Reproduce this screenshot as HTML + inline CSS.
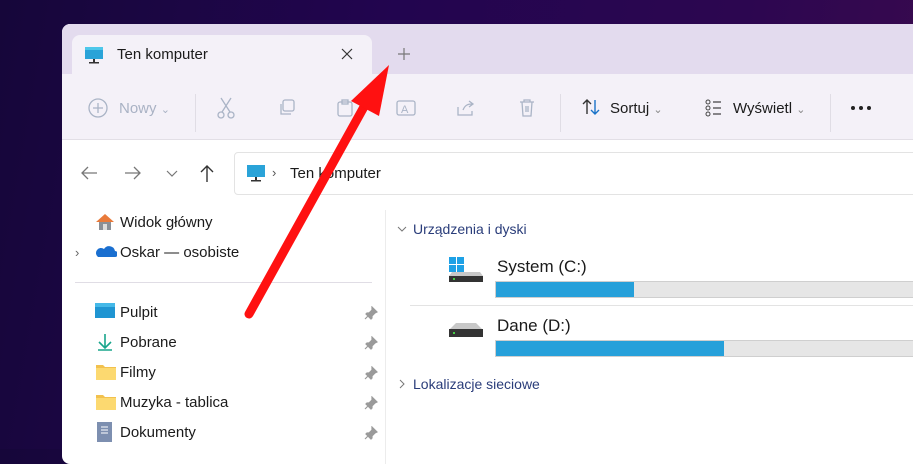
<!DOCTYPE html>
<html><head><meta charset="utf-8"><style>
*{margin:0;padding:0;box-sizing:border-box}
body{width:913px;height:449px;overflow:hidden;font-family:"Liberation Sans",sans-serif;background:linear-gradient(100deg,#16063a 0%,#22054f 40%,#2c0650 75%,#3a0a4e 100%);position:relative}
.win{position:absolute;left:62px;top:24px;width:870px;height:440px;background:#fff;border-radius:8px;overflow:hidden}
.title{position:absolute;left:0;top:0;right:0;height:50px;background:#e3dbee}
.tab{position:absolute;left:10px;top:11px;width:300px;height:40px;background:#f4f1f8;border-radius:8px 8px 0 0}
.tb{position:absolute;left:0;top:50px;right:0;height:66px;background:#f4f1f8;border-bottom:1px solid #e2dfe6}
.t{position:absolute;font-size:15px;color:#1b1b1b;white-space:nowrap}
.g{color:#a9b2c4}
.sep{position:absolute;width:1px;background:#e0dde5}
.ic{position:absolute}
</style></head><body>
<div class="win">
 <div class="title"></div>
 <div class="tab"></div>
 <svg class="ic" style="left:22px;top:22px" width="20" height="18"><rect x="1" y="1" width="18" height="12" fill="#2aa3d8"/><rect x="1" y="1" width="18" height="3" fill="#4dc7ea"/><rect x="9" y="13" width="2" height="3" fill="#333"/><rect x="5" y="16" width="10" height="1.5" fill="#333"/></svg>
 <div class="t" style="left:55px;top:22px;font-size:15px">Ten komputer</div>
 <svg class="ic" style="left:279px;top:24px" width="12" height="12"><path d="M1 1l10 10M11 1L1 11" stroke="#333" stroke-width="1.2"/></svg>
 <svg class="ic" style="left:336px;top:24px" width="12" height="12"><path d="M6 0v12M0 6h12" stroke="#777" stroke-width="1.2"/></svg>
 <div class="tb"></div>
 <svg class="ic" style="left:25px;top:73px" width="22" height="22"><circle cx="11" cy="11" r="9" fill="none" stroke="#aab4c6" stroke-width="1.3"/><path d="M11 6v10M6 11h10" stroke="#aab4c6" stroke-width="1.3"/></svg>
 <div class="t g" style="left:57px;top:76px">Nowy <span style="font-size:11px">⌄</span></div>
 <div class="sep" style="left:133px;top:70px;height:38px"></div>
 <svg class="ic" style="left:154px;top:73px" width="20" height="22"><path d="M5 1l9 14M15 1L6 15" stroke="#aab4c6" stroke-width="1.3"/><circle cx="5" cy="18" r="3" fill="none" stroke="#aab4c6" stroke-width="1.3"/><circle cx="15" cy="18" r="3" fill="none" stroke="#aab4c6" stroke-width="1.3"/></svg>
 <svg class="ic" style="left:215px;top:74px" width="20" height="20"><rect x="6" y="2" width="11" height="11" rx="2" fill="none" stroke="#aab4c6" stroke-width="1.3"/><path d="M4 6v10h10" fill="none" stroke="#aab4c6" stroke-width="1.3"/></svg>
 <svg class="ic" style="left:273px;top:74px" width="20" height="20"><rect x="3" y="4" width="14" height="14" rx="2" fill="none" stroke="#aab4c6" stroke-width="1.3"/><rect x="7" y="2" width="6" height="4" fill="none" stroke="#aab4c6" stroke-width="1.3"/></svg>
 <svg class="ic" style="left:333px;top:73px" width="22" height="22"><rect x="2" y="4" width="18" height="14" rx="2" fill="none" stroke="#aab4c6" stroke-width="1.3"/><text x="6" y="16" font-size="11" fill="#aab4c6" font-family="Liberation Sans">A</text></svg>
 <svg class="ic" style="left:393px;top:73px" width="22" height="22"><path d="M3 10v8h14v-4M8 13c2-5 5-6 9-6M14 4l4 3-4 3" fill="none" stroke="#aab4c6" stroke-width="1.3"/></svg>
 <svg class="ic" style="left:454px;top:73px" width="22" height="22"><path d="M4 5h14M8 5V3h6v2M6 5l1 14h8l1-14M10 9v6M12 9v6" fill="none" stroke="#aab4c6" stroke-width="1.3"/></svg>
 <div class="sep" style="left:498px;top:70px;height:38px"></div>
 <svg class="ic" style="left:518px;top:72px" width="22" height="22"><path d="M7 18V4M3 8l4-4 4 4" fill="none" stroke="#333" stroke-width="1.4"/><path d="M15 4v14M11 14l4 4 4-4" fill="none" stroke="#1a73c8" stroke-width="1.4"/></svg>
 <div class="t" style="left:548px;top:76px">Sortuj <span style="color:#888;font-size:11px">⌄</span></div>
 <svg class="ic" style="left:641px;top:73px" width="22" height="22"><circle cx="5" cy="5" r="2" fill="none" stroke="#444"/><circle cx="5" cy="11" r="2" fill="none" stroke="#444"/><circle cx="5" cy="17" r="2" fill="none" stroke="#444"/><path d="M10 5h8M10 11h8M10 17h8" stroke="#444" stroke-width="1.3"/></svg>
 <div class="t" style="left:671px;top:76px">Wyświetl <span style="color:#888;font-size:11px">⌄</span></div>
 <div class="sep" style="left:768px;top:70px;height:38px"></div>
 <svg class="ic" style="left:788px;top:81px" width="24" height="6"><circle cx="3" cy="3" r="2" fill="#222"/><circle cx="11" cy="3" r="2" fill="#222"/><circle cx="19" cy="3" r="2" fill="#222"/></svg>
 <svg class="ic" style="left:18px;top:141px" width="18" height="16"><path d="M17 8H2M8 2L2 8l6 6" fill="none" stroke="#777" stroke-width="1.3"/></svg>
 <svg class="ic" style="left:62px;top:141px" width="18" height="16"><path d="M1 8h15M10 2l6 6-6 6" fill="none" stroke="#777" stroke-width="1.3"/></svg>
 <svg class="ic" style="left:104px;top:146px" width="12" height="8"><path d="M1 1l5 5 5-5" fill="none" stroke="#777" stroke-width="1.2"/></svg>
 <svg class="ic" style="left:137px;top:140px" width="16" height="19"><path d="M8 18V2M2 8l6-6 6 6" fill="none" stroke="#333" stroke-width="1.4"/></svg>
 <div style="position:absolute;left:172px;top:128px;width:700px;height:43px;border:1px solid #e3e3e3;border-radius:4px 0 0 4px"></div>
 <svg class="ic" style="left:184px;top:140px" width="20" height="18"><rect x="1" y="1" width="18" height="12" fill="#2aa3d8"/><rect x="9" y="13" width="2" height="3" fill="#333"/><rect x="5" y="16" width="10" height="1.5" fill="#333"/></svg>
 <div class="t" style="left:210px;top:141px;font-size:13px;color:#555">›</div>
 <div class="t" style="left:228px;top:141px;font-size:15px">Ten komputer</div>
 <div class="sep" style="left:323px;top:186px;height:260px;background:#ececec"></div>
 <svg class="ic" style="left:33px;top:188px" width="20" height="20"><path d="M10 2L1 10h3v8h12v-8h3z" fill="#e97a3a"/><rect x="4" y="10" width="12" height="8" fill="#8a8f96"/><rect x="8" y="12" width="4" height="6" fill="#ddd"/></svg>
 <div class="t" style="left:58px;top:190px">Widok główny</div>
 <div class="t" style="left:13px;top:221px;font-size:13px;color:#666">›</div>
 <svg class="ic" style="left:33px;top:220px" width="22" height="14"><path d="M3 13h17a3 3 0 0 0 0-6 6 6 0 0 0-11-2A4 4 0 0 0 3 13z" fill="#1a6fd0"/></svg>
 <div class="t" style="left:58px;top:220px">Oskar — osobiste</div>
 <div class="sep" style="left:13px;top:258px;width:297px;height:1px"></div>
 <svg class="ic" style="left:33px;top:279px" width="20" height="16"><rect width="20" height="15" fill="#1f95d2"/><rect width="20" height="4" fill="#45b9e8"/></svg>
 <div class="t" style="left:58px;top:280px">Pulpit</div>
 <svg class="ic" style="left:34px;top:308px" width="18" height="20"><path d="M9 2v13M3 10l6 6 6-6M2 18h14" fill="none" stroke="#19a58c" stroke-width="1.6"/></svg>
 <div class="t" style="left:58px;top:310px">Pobrane</div>
 <svg class="ic" style="left:34px;top:340px" width="20" height="16"><path d="M0 1h7l2 2h11v13H0z" fill="#f2c14e"/><rect y="4" width="20" height="12" fill="#fcd970"/></svg>
 <div class="t" style="left:58px;top:340px">Filmy</div>
 <svg class="ic" style="left:34px;top:370px" width="20" height="16"><path d="M0 1h7l2 2h11v13H0z" fill="#f2c14e"/><rect y="4" width="20" height="12" fill="#fcd970"/></svg>
 <div class="t" style="left:58px;top:370px">Muzyka - tablica</div>
 <svg class="ic" style="left:35px;top:398px" width="16" height="20"><rect width="15" height="20" fill="#7d8fb0"/><path d="M4 5h7M4 8h7M4 11h7" stroke="#fff"/></svg>
 <div class="t" style="left:58px;top:400px">Dokumenty</div>
 <svg class="ic" style="left:302px;top:282px" width="14" height="14"><path d="M8 1l5 5-2 1-3 3 0 2-1 1-5-5 1-1 2 0 3-3z M4 10l-3 3" fill="#9a9a9a" stroke="#9a9a9a" stroke-width="1.2"/></svg>
 <svg class="ic" style="left:302px;top:312px" width="14" height="14"><path d="M8 1l5 5-2 1-3 3 0 2-1 1-5-5 1-1 2 0 3-3z M4 10l-3 3" fill="#9a9a9a" stroke="#9a9a9a" stroke-width="1.2"/></svg>
 <svg class="ic" style="left:302px;top:342px" width="14" height="14"><path d="M8 1l5 5-2 1-3 3 0 2-1 1-5-5 1-1 2 0 3-3z M4 10l-3 3" fill="#9a9a9a" stroke="#9a9a9a" stroke-width="1.2"/></svg>
 <svg class="ic" style="left:302px;top:372px" width="14" height="14"><path d="M8 1l5 5-2 1-3 3 0 2-1 1-5-5 1-1 2 0 3-3z M4 10l-3 3" fill="#9a9a9a" stroke="#9a9a9a" stroke-width="1.2"/></svg>
 <svg class="ic" style="left:302px;top:402px" width="14" height="14"><path d="M8 1l5 5-2 1-3 3 0 2-1 1-5-5 1-1 2 0 3-3z M4 10l-3 3" fill="#9a9a9a" stroke="#9a9a9a" stroke-width="1.2"/></svg>
 <svg class="ic" style="left:335px;top:202px" width="10" height="6"><path d="M1 1l4 4 4-4" fill="none" stroke="#777" stroke-width="1"/></svg>
 <div class="t" style="left:351px;top:197px;font-size:14px;color:#2a3d7a">Urządzenia i dyski</div>
 <svg class="ic" style="left:386px;top:233px" width="36" height="26"><rect x="1" y="0" width="7" height="7" fill="#1ea1e6"/><rect x="9" y="0" width="7" height="7" fill="#1ea1e6"/><rect x="1" y="8" width="7" height="7" fill="#1ea1e6"/><rect x="9" y="8" width="7" height="7" fill="#1ea1e6"/><path d="M4 15h28l3 4H1z" fill="#c8c8c8"/><rect x="1" y="19" width="34" height="6" fill="#333"/><rect x="5" y="21" width="2" height="2" fill="#4c4"/></svg>
 <div class="t" style="left:435px;top:233px;font-size:17px">System (C:)</div>
 <div style="position:absolute;left:433px;top:257px;width:437px;height:17px;background:#e6e6e6;border:1px solid #cfcfcf"><div style="width:138px;height:15px;background:#26a0da"></div></div>
 <div class="sep" style="left:348px;top:281px;width:522px;height:1px;background:#e3e3e3"></div>
 <svg class="ic" style="left:386px;top:296px" width="36" height="24"><path d="M8 3h20l6 6H2z" fill="#c8c8c8"/><rect x="1" y="9" width="34" height="8" fill="#333"/><rect x="5" y="12" width="2" height="2" fill="#4c4"/></svg>
 <div class="t" style="left:435px;top:292px;font-size:17px">Dane (D:)</div>
 <div style="position:absolute;left:433px;top:316px;width:437px;height:17px;background:#e6e6e6;border:1px solid #cfcfcf"><div style="width:228px;height:15px;background:#26a0da"></div></div>
 <svg class="ic" style="left:337px;top:355px" width="6" height="10"><path d="M1 1l4 4-4 4" fill="none" stroke="#777" stroke-width="1"/></svg>
 <div class="t" style="left:351px;top:352px;font-size:14px;color:#2a3d7a">Lokalizacje sieciowe</div>
</div>
<svg style="position:absolute;left:0;top:0" width="913" height="449"><line x1="249" y1="314" x2="365" y2="105" stroke="#f11" stroke-width="9" stroke-linecap="round"/><path d="M389 65L351 101L379 116z" fill="#f11"/></svg>
</body></html>
